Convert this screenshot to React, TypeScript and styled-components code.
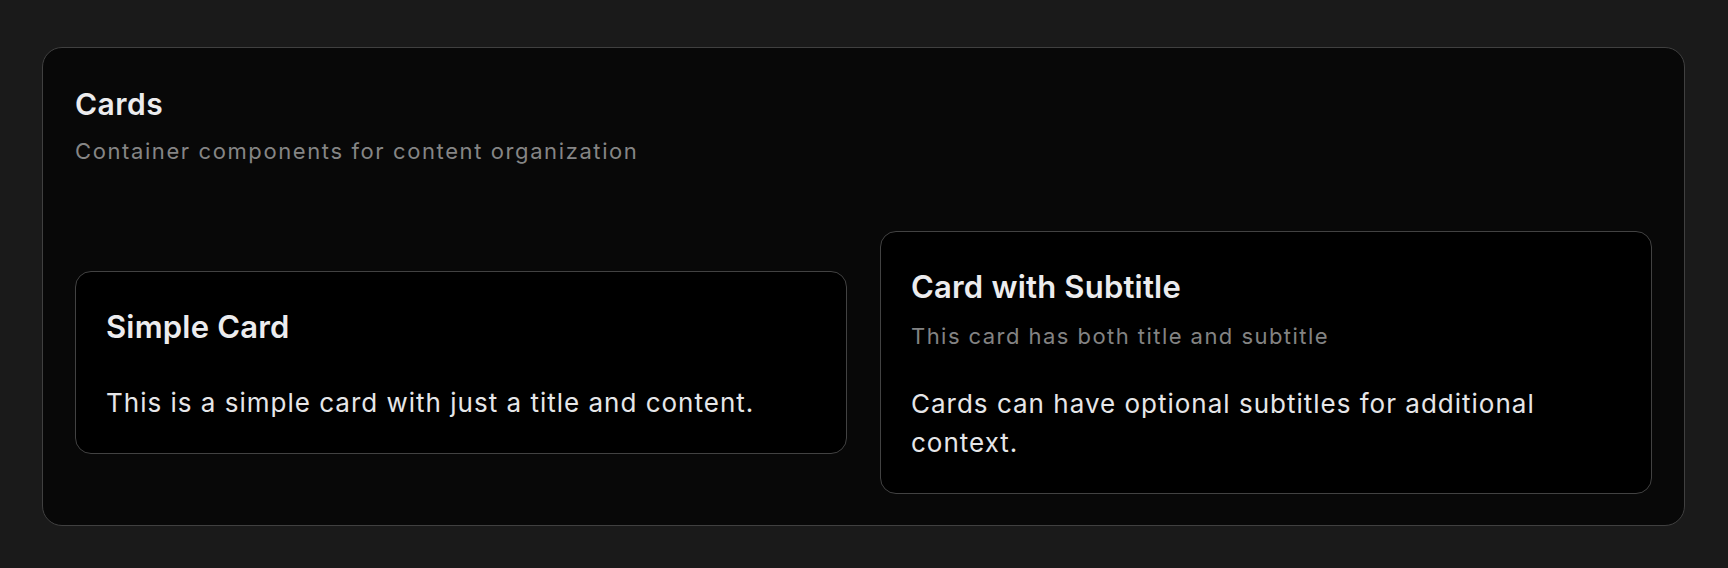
import styled, { createGlobalStyle } from "styled-components";

const GlobalStyle = createGlobalStyle`
	* {
		box-sizing: border-box;
	}
	html, body {
		margin: 0;
		padding: 0;
		background: #1a1a1a;
	}
	body {
		font-family: Inter, "Noto Sans", "Liberation Sans", sans-serif;
		color: #e6e6e8;
		-webkit-font-smoothing: antialiased;
	}
`;

const Page = styled.div`
	padding: 47px 43px 43px 42px;
	min-height: 568px;
`;

const Section = styled.section`
	background: #080808;
	border: 1px solid #404040;
	border-radius: 20px;
	padding: 32px 32px 31px;
`;

const SectionHeader = styled.header`
	margin-bottom: 63px;
`;

const Title = styled.h2`
	margin: 0;
	font-size: 30px;
	line-height: 48px;
	font-weight: 600;
	letter-spacing: 0.5px;
	color: #ececee;
`;

const Subtitle = styled.p`
	margin: 7px 0 0;
	font-size: 22px;
	line-height: 33px;
	font-weight: 400;
	letter-spacing: 1.6px;
	color: #858585;
`;

const CardGrid = styled.div`
	display: grid;
	grid-template-columns: 1fr 1fr;
	gap: 33px;
	align-items: center;
`;

const Card = styled.div`
	background: #000;
	border: 1px solid #424242;
	border-radius: 16px;
	padding: 31px 30px;
`;

const CardTitle = styled.h3`
	margin: 0;
	font-size: 31px;
	line-height: 48.6px;
	font-weight: 600;
	letter-spacing: 0.2px;
	color: #ececee;
`;

const CardSubtitle = styled.p`
	margin: 8px 0 0;
	font-size: 22px;
	line-height: 33px;
	letter-spacing: 1.45px;
	color: #838383;
`;

const CardBody = styled.p`
	margin: 31px 0 0;
	font-size: 26px;
	line-height: 39px;
	letter-spacing: 1px;
	color: #e6e6e8;
`;

type CardData = { title: string; subtitle?: string; body: string };

const cards: CardData[] = [
	{
		title: "Simple Card",
		body: "This is a simple card with just a title and content.",
	},
	{
		title: "Card with Subtitle",
		subtitle: "This card has both title and subtitle",
		body: "Cards can have optional subtitles for additional context.",
	},
];

export default function App() {
	return (
		<>
			<GlobalStyle />
			<Page>
				<Section>
					<SectionHeader>
						<Title>Cards</Title>
						<Subtitle>Container components for content organization</Subtitle>
					</SectionHeader>
					<CardGrid>
						{cards.map((c) => (
							<Card key={c.title}>
								<CardTitle>{c.title}</CardTitle>
								{c.subtitle && <CardSubtitle>{c.subtitle}</CardSubtitle>}
								<CardBody>{c.body}</CardBody>
							</Card>
						))}
					</CardGrid>
				</Section>
			</Page>
		</>
	);
}
